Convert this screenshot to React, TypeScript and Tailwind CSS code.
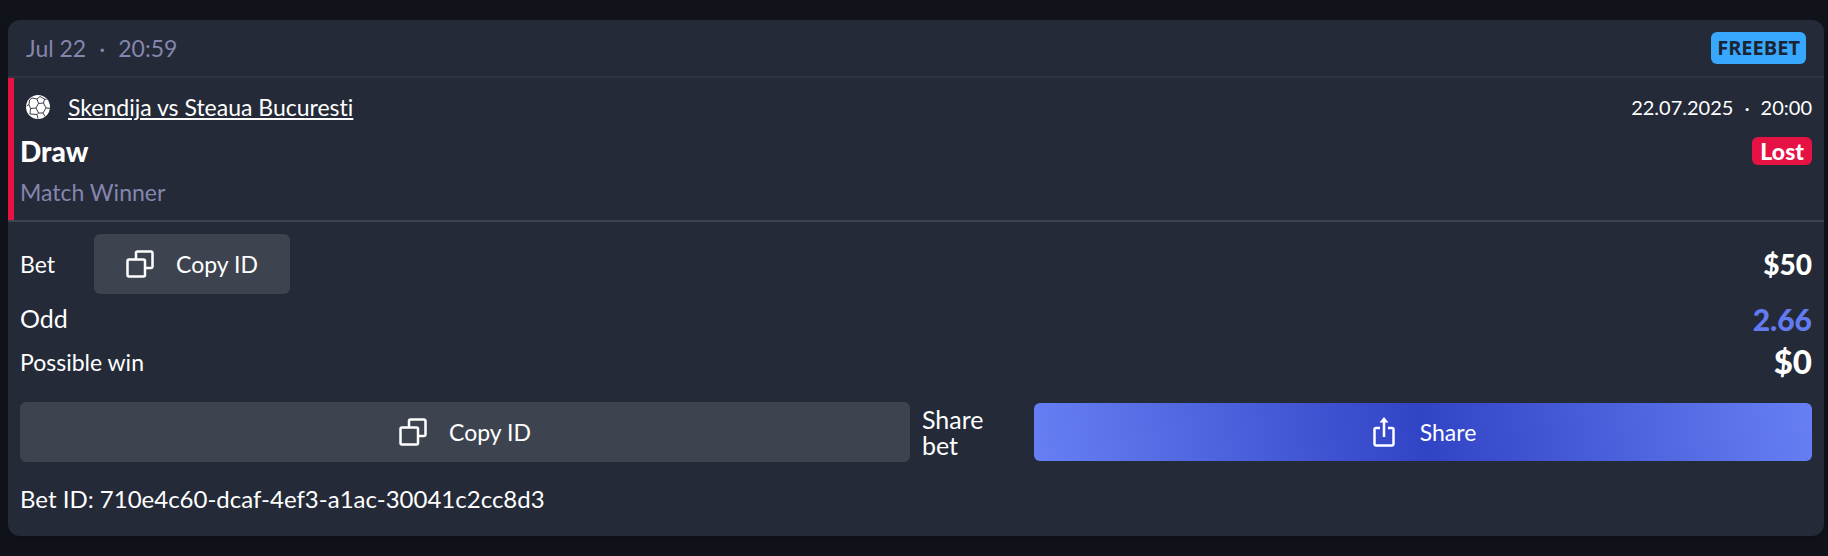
import React from 'react';

const BallIcon = () => (
  <svg viewBox="0 0 24 24" className="h-6 w-6 shrink-0" aria-hidden="true">
    <circle cx="12" cy="12" r="12" fill="#fff" />
    <g fill="none" stroke="#242a38" strokeWidth="0.9" strokeLinejoin="round">
      <path d="M12.5 8.5 17.5 8 20 13l-3 5h-4.5L10 13z" />
      <path d="M12.5 8.5 11 4 6 3 3.5 5l-.5 4.5L4.5 13.5 10 13" />
      <path d="M4.5 13.5 4 19l7 .5 1.5-1.5M11 19.5l1 4M3 9.5.5 11M11 4l3-2.5 4.5 2.5-1 4M20 13l4 .3M17 18l2 3.5M18.5 4l2 .5" />
    </g>
  </svg>
);

const CopyIcon = () => (
  <svg viewBox="0 0 28 28" className="h-7 w-7 shrink-0" fill="none" stroke="currentColor" strokeWidth="2.5" aria-hidden="true">
    <rect x="1.5" y="9.5" width="17.5" height="17" rx="1.5" />
    <path d="M10 9V3a1.5 1.5 0 0 1 1.5-1.5H25A1.5 1.5 0 0 1 26.5 3v13.5A1.5 1.5 0 0 1 25 18h-5.5" />
  </svg>
);

const ShareIcon = () => (
  <svg viewBox="0 0 28 32" className="h-8 w-7 shrink-0" fill="none" stroke="currentColor" strokeWidth="2.5" aria-hidden="true">
    <path d="M10 12H6a1.5 1.5 0 0 0-1.5 1.5V28A1.5 1.5 0 0 0 6 29.5h16a1.5 1.5 0 0 0 1.5-1.5V13.5A1.5 1.5 0 0 0 22 12h-4" />
    <path d="M14 21V4" />
    <path d="M14 1 18.5 6.5h-9z" fill="currentColor" stroke="none" />
  </svg>
);

interface CopyButtonProps {
  className: string;
}

const CopyButton: React.FC<CopyButtonProps> = ({ className }) => (
  <button
    type="button"
    className={`flex h-[60px] items-center justify-center gap-[22px] rounded-md bg-[#3e444f] text-[23px] ${className}`}
  >
    <CopyIcon />
    <span>Copy ID</span>
  </button>
);

export default function App() {
  return (
    <main className="min-h-screen bg-[#11131b] pt-5 pr-1 pb-5 pl-2 font-['Lato',sans-serif] text-[23px] text-white [font-variant-ligatures:none]">
      <article className="overflow-hidden rounded-xl bg-[#242a38] shadow-lg">
        <header className="flex h-[58px] items-center justify-between border-b-2 border-[#2e3442] px-[18px]">
          <time className="text-[#8486ad]">
            Jul 22<span className="mx-[13px]">·</span>20:59
          </time>
          <span className="flex h-8 items-center rounded-md bg-[#38a8ff] px-1.5 font-['Open_Sans',sans-serif] text-xl font-bold text-[#1b2433]">
            FREEBET
          </span>
        </header>

        {/* Selection */}
        <section className="flex h-36 flex-col border-b-2 border-[#3e4350]">
          <div className="flex grow flex-col border-l-6 border-[#e51243] pt-3 pr-3 pl-1.5">
            <div className="flex h-[34px] items-center justify-between">
              <div className="flex items-center gap-[18px] pl-1.5">
                <BallIcon />
                <a href="#match" className="underline decoration-2 underline-offset-2">
                  Skendija vs Steaua Bucuresti
                </a>
              </div>
              <time className="text-xl">
                22.07.2025<span className="mx-[11px]">·</span>20:00
              </time>
            </div>
            <div className="flex h-[54px] items-center justify-between font-black">
              <span className="text-[28px]">Draw</span>
              <span className="flex h-7 items-center rounded-md bg-[#e51243] px-2 text-[23px]">Lost</span>
            </div>
            <div className="leading-7 text-[#8486ad]">Match Winner</div>
          </div>
        </section>

        <section className="px-3 pt-3">
          <div className="flex items-center justify-between">
            <div className="flex items-center">
              <span className="w-[74px]">Bet</span>
              <CopyButton className="w-[196px]" />
            </div>
            <span className="text-[28px] font-black">$50</span>
          </div>
          <div className="flex h-[50px] items-center justify-between">
            <span className="text-[25px]">Odd</span>
            <span className="text-[30px] font-black text-[#637bf0]">2.66</span>
          </div>
          <div className="flex h-9 items-center justify-between">
            <span>Possible win</span>
            <span className="text-[33px] font-black">$0</span>
          </div>

          <div className="flex items-center pt-[22px]">
            <CopyButton className="grow" />
            <span className="w-[124px] shrink-0 pr-10 pl-3 text-[25px] leading-[26px]">Share bet</span>
            <button
              type="button"
              className="flex h-[58px] w-[778px] items-center justify-center gap-[22px] rounded-md bg-[linear-gradient(80deg,#677ff3,#3144c6_50%,#677ff3)]"
            >
              <ShareIcon />
              <span>Share</span>
            </button>
          </div>

          <p className="pt-5 pb-5 text-2xl leading-[34px]">Bet ID: 710e4c60-dcaf-4ef3-a1ac-30041c2cc8d3</p>
        </section>
      </article>
    </main>
  );
}
